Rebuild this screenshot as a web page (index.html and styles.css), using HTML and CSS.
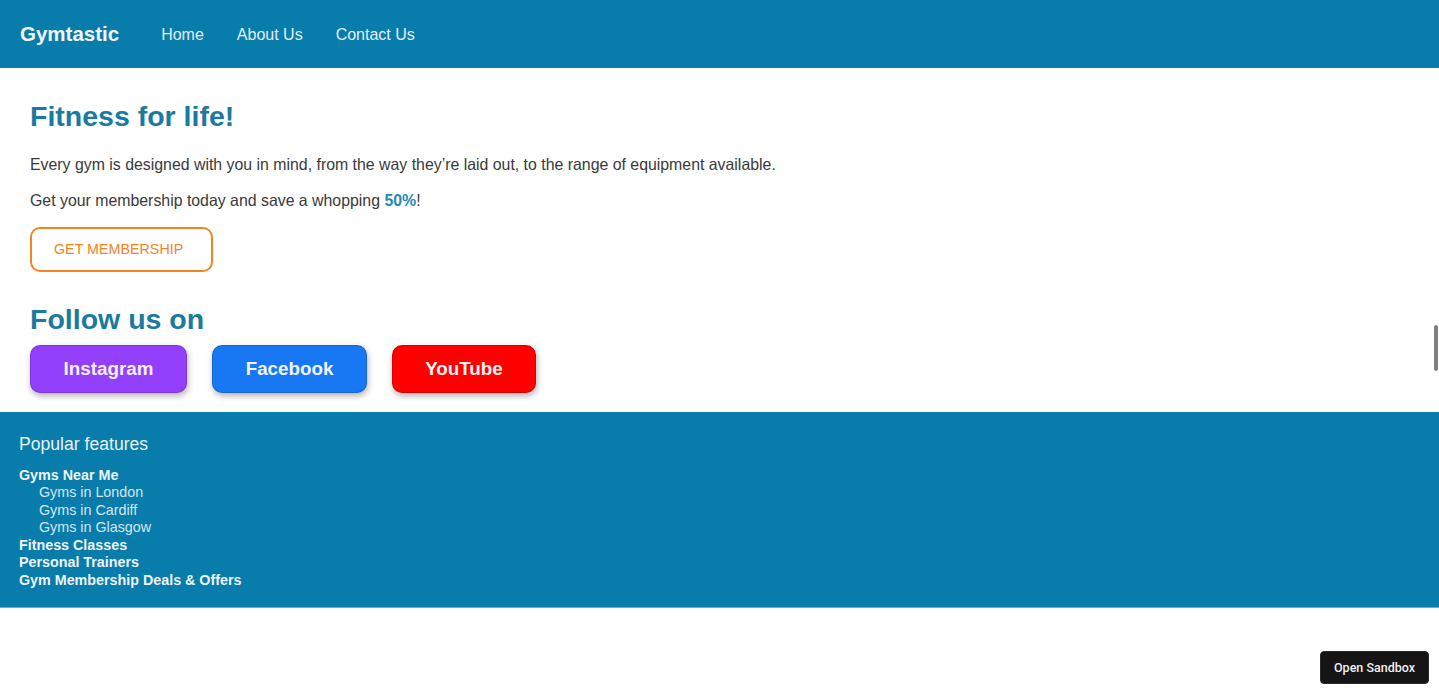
FILE: index.html
```html
<!DOCTYPE html>
<html lang="en">
<head>
<meta charset="utf-8">
<title>Gymtastic</title>
<link rel="stylesheet" href="styles.css">
</head>
<body>
<header class="topbar">
  <a class="brand" href="#">Gymtastic</a>
  <nav class="nav">
    <a href="#">Home</a>
    <a href="#">About Us</a>
    <a href="#">Contact Us</a>
  </nav>
</header>
<main class="main">
  <h1 class="title">Fitness for life!</h1>
  <p class="text">Every gym is designed with you in mind, from the way they’re laid out, to the range of equipment available.</p>
  <p class="text">Get your membership today and save a whopping <strong class="accent">50%</strong>!</p>
  <a class="cta" href="#">GET MEMBERSHIP</a>
  <h2 class="title follow">Follow us on</h2>
  <div class="socials">
    <a class="social insta" href="#">Instagram</a>
    <a class="social fb" href="#">Facebook</a>
    <a class="social yt" href="#">YouTube</a>
  </div>
</main>
<footer class="footer">
  <h3 class="footer-title">Popular features</h3>
  <ul class="links">
    <li class="link-main">Gyms Near Me
      <ul class="sublinks">
        <li>Gyms in London</li>
        <li>Gyms in Cardiff</li>
        <li>Gyms in Glasgow</li>
      </ul>
    </li>
    <li class="link-main">Fitness Classes</li>
    <li class="link-main">Personal Trainers</li>
    <li class="link-main">Gym Membership Deals &amp; Offers</li>
  </ul>
</footer>
<div class="scroll-thumb"></div>
<button class="sandbox">Open Sandbox</button>
</body>
</html>
```
FILE: styles.css
```css
* { box-sizing: border-box; }
html, body { margin: 0; padding: 0; }
body {
  font-family: "Liberation Sans", Arial, sans-serif;
  background: #ffffff;
  color: #333333;
}
a { text-decoration: none; }

.topbar {
  height: 68px;
  background: #087cab;
  display: flex;
  align-items: center;
  padding: 0 20px;
}
.brand {
  color: #f2f6f8;
  font-weight: bold;
  font-size: 20.5px;
  margin-right: 42px;
  margin-top: -1px;
}
.nav { display: flex; gap: 33px; }
.nav a {
  color: #e4eef4;
  font-size: 16px;
  margin-top: 2px;
}

.main {
  padding: 32px 30px 19px 30px;
}
.title {
  margin: 0;
  color: #1a7aa0;
  font-size: 28.5px;
  font-weight: bold;
  line-height: 33px;
}
.text {
  margin: 0;
  font-size: 15.87px;
  line-height: 18px;
  color: #3a3a3a;
}
.title + .text { margin-top: 23px; }
.text + .text { margin-top: 18px; }
.accent { color: #2388b8; }

.cta {
  display: inline-block;
  margin-top: 17px;
  height: 45px;
  width: 183px;
  padding: 0 22px;
  border: 2px solid #f5831f;
  border-radius: 10px;
  color: #f5831f;
  font-size: 14.3px;
  line-height: 41px;
}

.follow { margin-top: 31px; }

.socials {
  display: flex;
  gap: 25px;
  margin-top: 9px;
}
.social {
  display: block;
  height: 48px;
  padding: 0 32px;
  border-radius: 10px;
  color: #f4eefa;
  font-size: 18.8px;
  font-weight: bold;
  line-height: 46px;
  text-align: center;
  border: 1px solid rgba(0,0,0,0.15);
  box-shadow: 1px 3px 6px rgba(0,0,0,0.3);
}
.insta { background: #9340fd; width: 157px; }
.fb { background: #1877f2; width: 155px; color: #f2f6fc; }
.yt { background: #fe0000; width: 144px; color: #fff2f2; }

.footer {
  background: #087cab;
  padding: 22px 19px 18px 19px;
  color: #eef4f7;
  border-bottom: 1px solid #5fb0d2;
}
.footer-title {
  margin: 0;
  font-weight: normal;
  font-size: 17.6px;
  line-height: 20px;
  color: #e8f1f6;
}
.links {
  list-style: none;
  margin: 13px 0 0 0;
  padding: 0;
  font-size: 14.3px;
  line-height: 17.45px;
}
.link-main { font-weight: bold; color: #eef4f7; }
.sublinks {
  list-style: none;
  margin: 0;
  padding: 0 0 0 20px;
  font-weight: normal;
  color: #d4e7f1;
}

.scroll-thumb {
  position: fixed;
  right: 1px;
  top: 325px;
  width: 4px;
  height: 46px;
  border-radius: 2px;
  background: #7f7f7f;
}
.sandbox {
  position: fixed;
  right: 10px;
  bottom: 11px;
  width: 109px;
  height: 33px;
  background: #151515;
  color: #f0f0f0;
  border: 1px solid #2a2a2a;
  border-radius: 4px;
  font-family: Roboto, "Liberation Sans", sans-serif;
  font-weight: 500;
  font-size: 12.5px;
  padding: 0;
}
```
